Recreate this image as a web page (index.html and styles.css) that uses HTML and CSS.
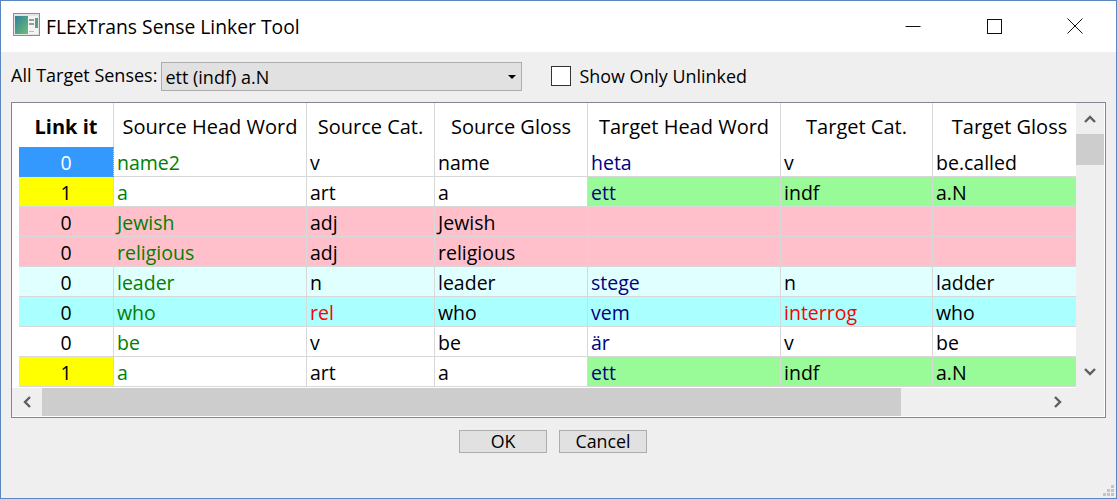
FILE: index.html
```html
<!DOCTYPE html>
<html lang="en">
<head>
    <meta charset="UTF-8">
    <title>FLExTrans Sense Linker Tool</title>
    <link rel="stylesheet" href="styles.css">
</head>
<body>
    <div class="window">
        <div class="titlebar">
            <svg class="app-icon" width="28" height="24" viewBox="0 0 28 24">
                <defs>
                    <linearGradient id="pane" x1="0" y1="0" x2="1" y2="1">
                        <stop offset="0" stop-color="#2f7f9f"/>
                        <stop offset="1" stop-color="#6fc06f"/>
                    </linearGradient>
                </defs>
                <rect x="0.5" y="0.5" width="26" height="22" fill="#e4e4e4" stroke="#8a8f96"/>
                <rect x="2" y="3" width="13" height="18" fill="url(#pane)"/>
                <rect x="15" y="3" width="10" height="18" fill="#f4f4f4"/>
                <rect x="16" y="6" width="5" height="2" fill="#9a9a9a"/>
                <rect x="16" y="10" width="5" height="2" fill="#9a9a9a"/>
                <rect x="22" y="5" width="3" height="10" fill="#5a9f80"/>
                <rect x="16" y="18" width="5" height="1" fill="#bbbbbb"/>
            </svg>
            <span class="title">FLExTrans Sense Linker Tool</span>
            <div class="win-buttons">
                <svg width="16" height="16" viewBox="0 0 16 16"><path d="M0.5 8.5H15.5" stroke="#111" fill="none"/></svg>
                <svg width="16" height="16" viewBox="0 0 16 16"><rect x="1.5" y="1.5" width="14" height="14" stroke="#111" fill="none"/></svg>
                <svg width="16" height="16" viewBox="0 0 16 16"><path d="M0.5 0.5L15.5 15.5M15.5 0.5L0.5 15.5" stroke="#111" fill="none"/></svg>
            </div>
        </div>

        <div class="toolbar">
            <label class="senses-label">All Target Senses:</label>
            <div class="combo">
                <span>ett (indf) a.N</span>
                <span class="combo-arrow"></span>
            </div>
            <span class="checkbox"></span>
            <span class="check-label">Show Only Unlinked</span>
        </div>

        <div class="frame">
            <div class="frame-top">
                <div class="row-gutter"></div>
                <div class="grid">
                    <div class="head bold">Link it</div>
                    <div class="head">Source Head Word</div>
                    <div class="head">Source Cat.</div>
                    <div class="head">Source Gloss</div>
                    <div class="head">Target Head Word</div>
                    <div class="head">Target Cat.</div>
                    <div class="head last">Target Gloss</div>

                    <div class="cell num current">0</div>
                    <div class="cell green">name2</div>
                    <div class="cell">v</div>
                    <div class="cell">name</div>
                    <div class="cell navy">heta</div>
                    <div class="cell">v</div>
                    <div class="cell last">be.called</div>

                    <div class="cell num yellow">1</div>
                    <div class="cell green">a</div>
                    <div class="cell">art</div>
                    <div class="cell">a</div>
                    <div class="cell navy lime">ett</div>
                    <div class="cell lime">indf</div>
                    <div class="cell lime last">a.N</div>

                    <div class="cell num pink">0</div>
                    <div class="cell green pink">Jewish</div>
                    <div class="cell pink">adj</div>
                    <div class="cell pink">Jewish</div>
                    <div class="cell pink"></div>
                    <div class="cell pink"></div>
                    <div class="cell pink last"></div>

                    <div class="cell num pink">0</div>
                    <div class="cell green pink">religious</div>
                    <div class="cell pink">adj</div>
                    <div class="cell pink">religious</div>
                    <div class="cell pink"></div>
                    <div class="cell pink"></div>
                    <div class="cell pink last"></div>

                    <div class="cell num pale">0</div>
                    <div class="cell green pale">leader</div>
                    <div class="cell pale">n</div>
                    <div class="cell pale">leader</div>
                    <div class="cell navy pale">stege</div>
                    <div class="cell pale">n</div>
                    <div class="cell pale last">ladder</div>

                    <div class="cell num aqua">0</div>
                    <div class="cell green aqua">who</div>
                    <div class="cell red aqua">rel</div>
                    <div class="cell aqua">who</div>
                    <div class="cell navy aqua">vem</div>
                    <div class="cell red aqua">interrog</div>
                    <div class="cell aqua last">who</div>

                    <div class="cell num">0</div>
                    <div class="cell green">be</div>
                    <div class="cell">v</div>
                    <div class="cell">be</div>
                    <div class="cell navy">är</div>
                    <div class="cell">v</div>
                    <div class="cell last">be</div>

                    <div class="cell num yellow">1</div>
                    <div class="cell green">a</div>
                    <div class="cell">art</div>
                    <div class="cell">a</div>
                    <div class="cell navy lime">ett</div>
                    <div class="cell lime">indf</div>
                    <div class="cell lime last">a.N</div>
                </div>
                <div class="vscroll">
                    <svg class="sb-arrow" width="12" height="8" viewBox="0 0 12 8"><path d="M1 7L6 2L11 7" fill="none" stroke="#5f5f5f" stroke-width="2.4"/></svg>
                    <div class="vthumb"></div>
                    <div class="spacer"></div>
                    <svg class="sb-arrow" width="12" height="8" viewBox="0 0 12 8"><path d="M1 1L6 6L11 1" fill="none" stroke="#5f5f5f" stroke-width="2.4"/></svg>
                </div>
            </div>
            <div class="hscroll">
                <div class="hbtn"><svg width="8" height="12" viewBox="0 0 8 12"><path d="M7 1L2 6L7 11" fill="none" stroke="#5f5f5f" stroke-width="2.4"/></svg></div>
                <div class="hthumb"></div>
                <div class="hbtn right"><svg width="8" height="12" viewBox="0 0 8 12"><path d="M1 1L6 6L1 11" fill="none" stroke="#5f5f5f" stroke-width="2.4"/></svg></div>
            </div>
        </div>

        <div class="actions">
            <button class="btn">OK</button>
            <button class="btn">Cancel</button>
        </div>

        <svg class="grip" width="11" height="11" viewBox="0 0 11 11">
            <path d="M8 0h3v3H8zM4 4h3v3H4zM8 4h3v3H8zM0 8h3v3H0zM4 8h3v3H4zM8 8h3v3H8z" fill="#c4c4c4"/>
        </svg>
    </div>
</body>
</html>
```

FILE: styles.css
```css
html, body {
    margin: 0;
    padding: 0;
}

body {
    font-family: 'Open Sans', 'Noto Sans', sans-serif;
    color: #000;
    overflow: hidden;
}

.window {
    position: relative;
    box-sizing: border-box;
    width: 1117px;
    height: 499px;
    border: 1px solid #5a87c0;
    background-color: #efefef;
    display: flex;
    flex-direction: column;
}

.titlebar {
    height: 51px;
    background-color: #fff;
    display: flex;
    align-items: center;
    padding-left: 12px;
    flex-shrink: 0;
}

.app-icon {
    margin-right: 5px;
    margin-bottom: 3px;
}

.title {
    font-size: 19.3px;
    margin-top: -1px;
}

.win-buttons {
    margin-left: auto;
    display: flex;
    gap: 65px;
    padding-right: 33px;
    margin-top: -1px;
}

.toolbar {
    height: 50px;
    display: flex;
    align-items: center;
    padding-left: 10px;
    flex-shrink: 0;
}

.senses-label {
    font-size: 18px;
    margin-right: 4px;
    margin-top: -4px;
    white-space: nowrap;
}

.combo {
    box-sizing: border-box;
    width: 361px;
    height: 29px;
    margin-top: -1px;
    border: 1px solid #adadad;
    background-color: #e1e1e1;
    display: flex;
    align-items: center;
    justify-content: space-between;
    padding: 0 3px;
    font-size: 18px;
    margin-right: 29px;
}

.combo-arrow {
    width: 0;
    height: 0;
    border-left: 4px solid transparent;
    border-right: 4px solid transparent;
    border-top: 4px solid #000;
    margin-right: 2px;
}

.checkbox {
    box-sizing: border-box;
    width: 20px;
    height: 20px;
    border: 1px solid #333;
    background-color: #fff;
    margin-right: 8px;
    margin-top: -2px;
}

.check-label {
    font-size: 17.9px;
    margin-top: -2px;
}

.frame {
    box-sizing: border-box;
    margin-left: 10px;
    width: 1095px;
    height: 316px;
    border: 1px solid #82878f;
    display: flex;
    flex-direction: column;
}

.frame-top {
    display: flex;
    height: 285px;
    flex-shrink: 0;
}

.row-gutter {
    width: 7px;
    background-color: #fff;
    flex-shrink: 0;
}

.grid {
    display: grid;
    grid-template-columns: 95px 193px 128px 153px 193px 152px 143px;
    grid-template-rows: 44px repeat(8, 30px) 1px;
    width: 1057px;
    flex-shrink: 0;
    font-size: 19.5px;
    background-color: #fff;
}

.head {
    display: flex;
    align-items: center;
    justify-content: center;
    padding-top: 2px;
    border-right: 1px solid #d8d8d8;
    font-size: 20px;
    white-space: nowrap;
    overflow: hidden;
}

.head.last {
    padding-left: 10px;
}

.bold {
    font-weight: 700;
}

.cell {
    box-sizing: border-box;
    display: flex;
    align-items: center;
    padding-left: 3px;
    padding-top: 1px;
    border-right: 1px solid #d8d8d8;
    border-bottom: 1px solid #d8d8d8;
    white-space: nowrap;
}

.last {
    border-right: 0;
}

.num {
    justify-content: center;
    padding-left: 0;
}

.current {
    background-color: #3399ff;
    color: #fff;
    border-bottom: 0;
    outline: 1px dotted #d9792b;
    outline-offset: -1px;
    box-shadow: inset 1px 0 0 #b0703a;
}

.green { color: #008000; }
.navy { color: #000080; }
.red { color: #ff0000; }
.yellow { background-color: #ffff00; }
.lime { background-color: #98fb98; }
.pink { background-color: #ffc0cb; }
.pale { background-color: #e0ffff; }
.aqua { background-color: #aaffff; }

.vscroll {
    width: 29px;
    box-sizing: border-box;
    flex-shrink: 0;
    border-right: 1px solid #fff;
    display: flex;
    flex-direction: column;
    align-items: center;
}

.sb-arrow {
    margin: 12px 0;
    flex-shrink: 0;
}

.vthumb {
    width: 28px;
    height: 31px;
    background-color: #cdcdcd;
    margin-top: -1px;
}

.spacer {
    flex: 1;
}

.hscroll {
    display: flex;
    flex: 1;
    box-sizing: border-box;
    border-right: 1px solid #fff;
    border-bottom: 1px solid #fff;
}

.hbtn {
    width: 30px;
    display: flex;
    align-items: center;
    justify-content: center;
    flex-shrink: 0;
}

.hbtn.right {
    width: 175px;
    justify-content: flex-end;
    padding-right: 14px;
    box-sizing: border-box;
}

.hthumb {
    width: 859px;
    background-color: #cdcdcd;
}

.actions {
    display: flex;
    justify-content: center;
    gap: 12px;
    padding-top: 12px;
    padding-right: 11px;
}

.btn {
    box-sizing: border-box;
    width: 88px;
    height: 23px;
    border: 1px solid #adadad;
    background-color: #e1e1e1;
    font-family: inherit;
    font-size: 17.8px;
    padding: 0;
    line-height: 1;
}

.grip {
    position: absolute;
    right: 2px;
    bottom: 2px;
}
```
